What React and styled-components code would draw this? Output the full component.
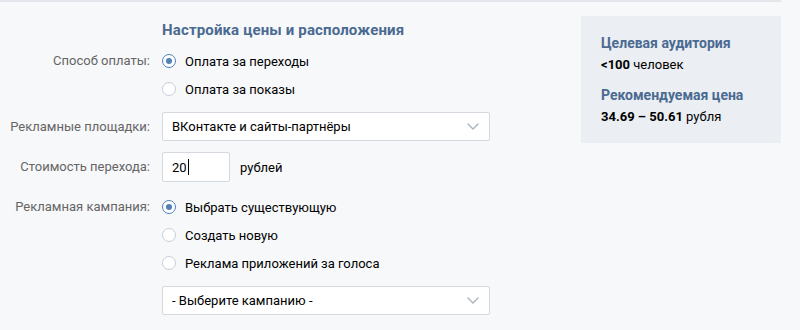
import React from "react";
import styled, { createGlobalStyle } from "styled-components";

const Global = createGlobalStyle`
  html, body { margin: 0; padding: 0; background: #f7f8fa; }
  body { font-family: Roboto, "Open Sans", "DejaVu Sans", sans-serif; font-size: 13px; color: #000; }
`;

const Page = styled.div`
  display: flex;
  width: 781px;
  border-top: 2px solid #e3e7ec;
  height: 328px;
  box-sizing: border-box;
`;

const Main = styled.div`
  display: flex;
  flex-direction: column;
  width: 490px;
`;

const Heading = styled.div`
  margin: 18px 0 0 162px;
  font-size: 15px;
  font-weight: 700;
  letter-spacing: 0.15px;
  line-height: 20px;
  color: #4a6a91;
`;

const Row = styled.div`
  display: grid;
  grid-template-columns: 150px 1fr;
  column-gap: 12px;
  margin-top: ${(p) => p.$mt}px;
`;

const Label = styled.div`
  text-align: right;
  color: #656565;
  line-height: ${(p) => p.$lh || 28}px;
`;

const Controls = styled.div`
  display: flex;
  flex-direction: column;
`;

const RadioItem = styled.label`
  display: flex;
  align-items: center;
  height: 28px;
  gap: 9px;
  color: #000;
`;

const RadioCircle = styled.span`
  width: 14px;
  height: 14px;
  box-sizing: border-box;
  border-radius: 50%;
  border: 1px solid ${(p) => (p.$on ? "#5181b8" : "#c5d0db")};
  background: #fff;
  display: flex;
  align-items: center;
  justify-content: center;
  &::after {
    content: "";
    width: 6px;
    height: 6px;
    border-radius: 50%;
    background: ${(p) => (p.$on ? "#5181b8" : "transparent")};
  }
`;

const Select = styled.div`
  display: flex;
  align-items: center;
  justify-content: space-between;
  width: 328px;
  height: 29px;
  box-sizing: border-box;
  padding: 0 10px 0 9px;
  background: #fff;
  border: 1px solid #d3d9de;
  border-radius: 2px;
  color: #000;
  margin-top: ${(p) => p.$mt || 0}px;
`;

const InputRow = styled.div`
  display: flex;
  align-items: center;
  gap: 10px;
`;

const Input = styled.div`
  display: flex;
  align-items: center;
  width: 68px;
  height: 30px;
  box-sizing: border-box;
  padding: 0 9px;
  background: #fff;
  border: 1px solid #d3d9de;
  border-radius: 2px;
`;

const Caret = styled.span`
  display: inline-block;
  width: 1px;
  height: 16px;
  background: #000;
  margin-left: 1px;
`;

const Aside = styled.div`
  margin: 14px 0 0 91px;
  width: 200px;
  height: 127px;
  box-sizing: border-box;
  background: #ebeef2;
  padding: 18px 20px 0;
`;

const AsideTitle = styled.div`
  font-size: 14px;
  font-weight: 700;
  line-height: 18px;
  color: #4a6a91;
  margin-top: ${(p) => p.$mt || 0}px;
`;

const AsideValue = styled.div`
  line-height: 18px;
  margin-top: 4px;
  color: #000;
  b { font-weight: 700; }
`;

const Chevron = () => (
  <svg width="12" height="7" viewBox="0 0 12 7" fill="none">
    <path d="M1 1l5 5 5-5" stroke="#a8b2bd" strokeWidth="1.4" strokeLinecap="round" strokeLinejoin="round" />
  </svg>
);

const Radio = ({ on, children }) => (
  <RadioItem>
    <RadioCircle $on={on} />
    <span>{children}</span>
  </RadioItem>
);

export default function App() {
  return (
    <>
      <Global />
      <Page>
        <Main>
          <Heading>Настройка цены и расположения</Heading>
          <Row $mt={7}>
            <Label>Способ оплаты:</Label>
            <Controls>
              <Radio on>Оплата за переходы</Radio>
              <Radio>Оплата за показы</Radio>
            </Controls>
          </Row>
          <Row $mt={9}>
            <Label $lh={29}>Рекламные площадки:</Label>
            <Select>
              <span>ВКонтакте и сайты-партнёры</span>
              <Chevron />
            </Select>
          </Row>
          <Row $mt={11}>
            <Label $lh={30}>Стоимость перехода:</Label>
            <InputRow>
              <Input>
                20<Caret />
              </Input>
              <span>рублей</span>
            </InputRow>
          </Row>
          <Row $mt={11}>
            <Label>Рекламная кампания:</Label>
            <Controls>
              <Radio on>Выбрать существующую</Radio>
              <Radio>Создать новую</Radio>
              <Radio>Реклама приложений за голоса</Radio>
              <Select $mt={9}>
                <span>- Выберите кампанию -</span>
                <Chevron />
              </Select>
            </Controls>
          </Row>
        </Main>
        <Aside>
          <AsideTitle>Целевая аудитория</AsideTitle>
          <AsideValue>
            <b>&lt;100</b> человек
          </AsideValue>
          <AsideTitle $mt={12}>Рекомендуемая цена</AsideTitle>
          <AsideValue>
            <b>34.69 – 50.61</b> рубля
          </AsideValue>
        </Aside>
      </Page>
    </>
  );
}
